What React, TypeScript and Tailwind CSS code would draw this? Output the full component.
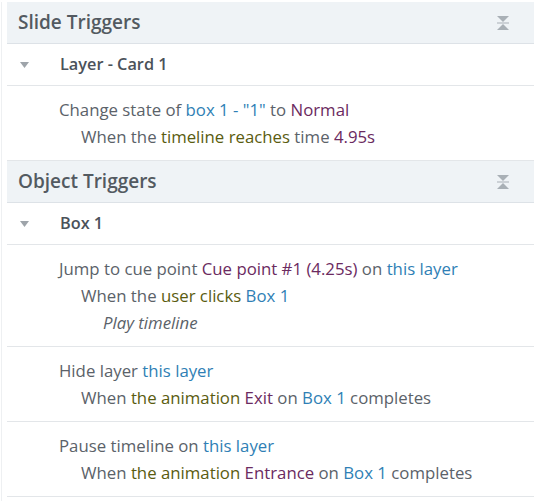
import React from "react";

const B = ({ children }: { children: React.ReactNode }) => (
  <span className="text-[#2f7fb5]">{children}</span>
);
const P = ({ children }: { children: React.ReactNode }) => (
  <span className="text-[#6b2a60]">{children}</span>
);
const O = ({ children }: { children: React.ReactNode }) => (
  <span className="text-[#5a5c10]">{children}</span>
);

function CollapseIcon() {
  return (
    <svg width="14" height="16" viewBox="0 0 14 16" className="mr-[24px]">
      <path d="M1 1 H13 L7 7 Z" fill="#a9b0b6" />
      <rect x="1" y="7.5" width="12" height="1" fill="#a9b0b6" />
      <path d="M7 9 L13 15 H1 Z" fill="#a9b0b6" />
    </svg>
  );
}

function Header({ title }: { title: string }) {
  return (
    <div className="flex h-[42px] items-center justify-between border-b border-[#dde2e7] bg-[#eff3f6] pl-[11px]">
      <span className="text-[19px] font-semibold text-[#535a61]">{title}</span>
      <CollapseIcon />
    </div>
  );
}

function Group({ title }: { title: string }) {
  return (
    <div className="flex h-[42px] items-center border-b border-[#e3e6e9]">
      <svg width="9" height="6" viewBox="0 0 9 6" className="ml-[13px] mr-[31px]">
        <path d="M0 0 H9 L4.5 6 Z" fill="#9ea4aa" />
      </svg>
      <span className="text-[16.3px] font-semibold text-[#4b525a]">{title}</span>
    </div>
  );
}

function Block({ children }: { children: React.ReactNode }) {
  return (
    <div className="border-b border-[#e3e6e9] py-[10px] pl-[52px] text-[16.8px] leading-[27px] text-[#5b6269]">
      {children}
    </div>
  );
}

export default function App() {
  return (
    <div
      className="h-[501px] w-[534px] overflow-hidden bg-white pl-[1px] pt-[2px]"
      style={{ fontFamily: '"Open Sans", "Noto Sans", sans-serif' }}
    >
      <div className="h-full border-l border-[#eef0f2] pl-[5px]">
        <Header title="Slide Triggers" />
        <Group title="Layer - Card 1" />
        <Block>
          <div>
            Change state of <B>box 1 - "1"</B> to <P>Normal</P>
          </div>
          <div className="pl-[22px]">
            When the <O>timeline reaches</O> time <P>4.95s</P>
          </div>
        </Block>
        <Header title="Object Triggers" />
        <Group title="Box 1" />
        <Block>
          <div>
            Jump to cue point <P>Cue point #1 (4.25s)</P> on <B>this layer</B>
          </div>
          <div className="pl-[22px]">
            When the <O>user clicks</O> <B>Box 1</B>
          </div>
          <div className="pl-[44px] italic">Play timeline</div>
        </Block>
        <Block>
          <div>
            Hide layer <B>this layer</B>
          </div>
          <div className="pl-[22px]">
            When <O>the animation</O> <P>Exit</P> on <B>Box 1</B> completes
          </div>
        </Block>
        <Block>
          <div>
            Pause timeline on <B>this layer</B>
          </div>
          <div className="pl-[22px]">
            When <O>the animation</O> <P>Entrance</P> on <B>Box 1</B> completes
          </div>
        </Block>
      </div>
    </div>
  );
}
